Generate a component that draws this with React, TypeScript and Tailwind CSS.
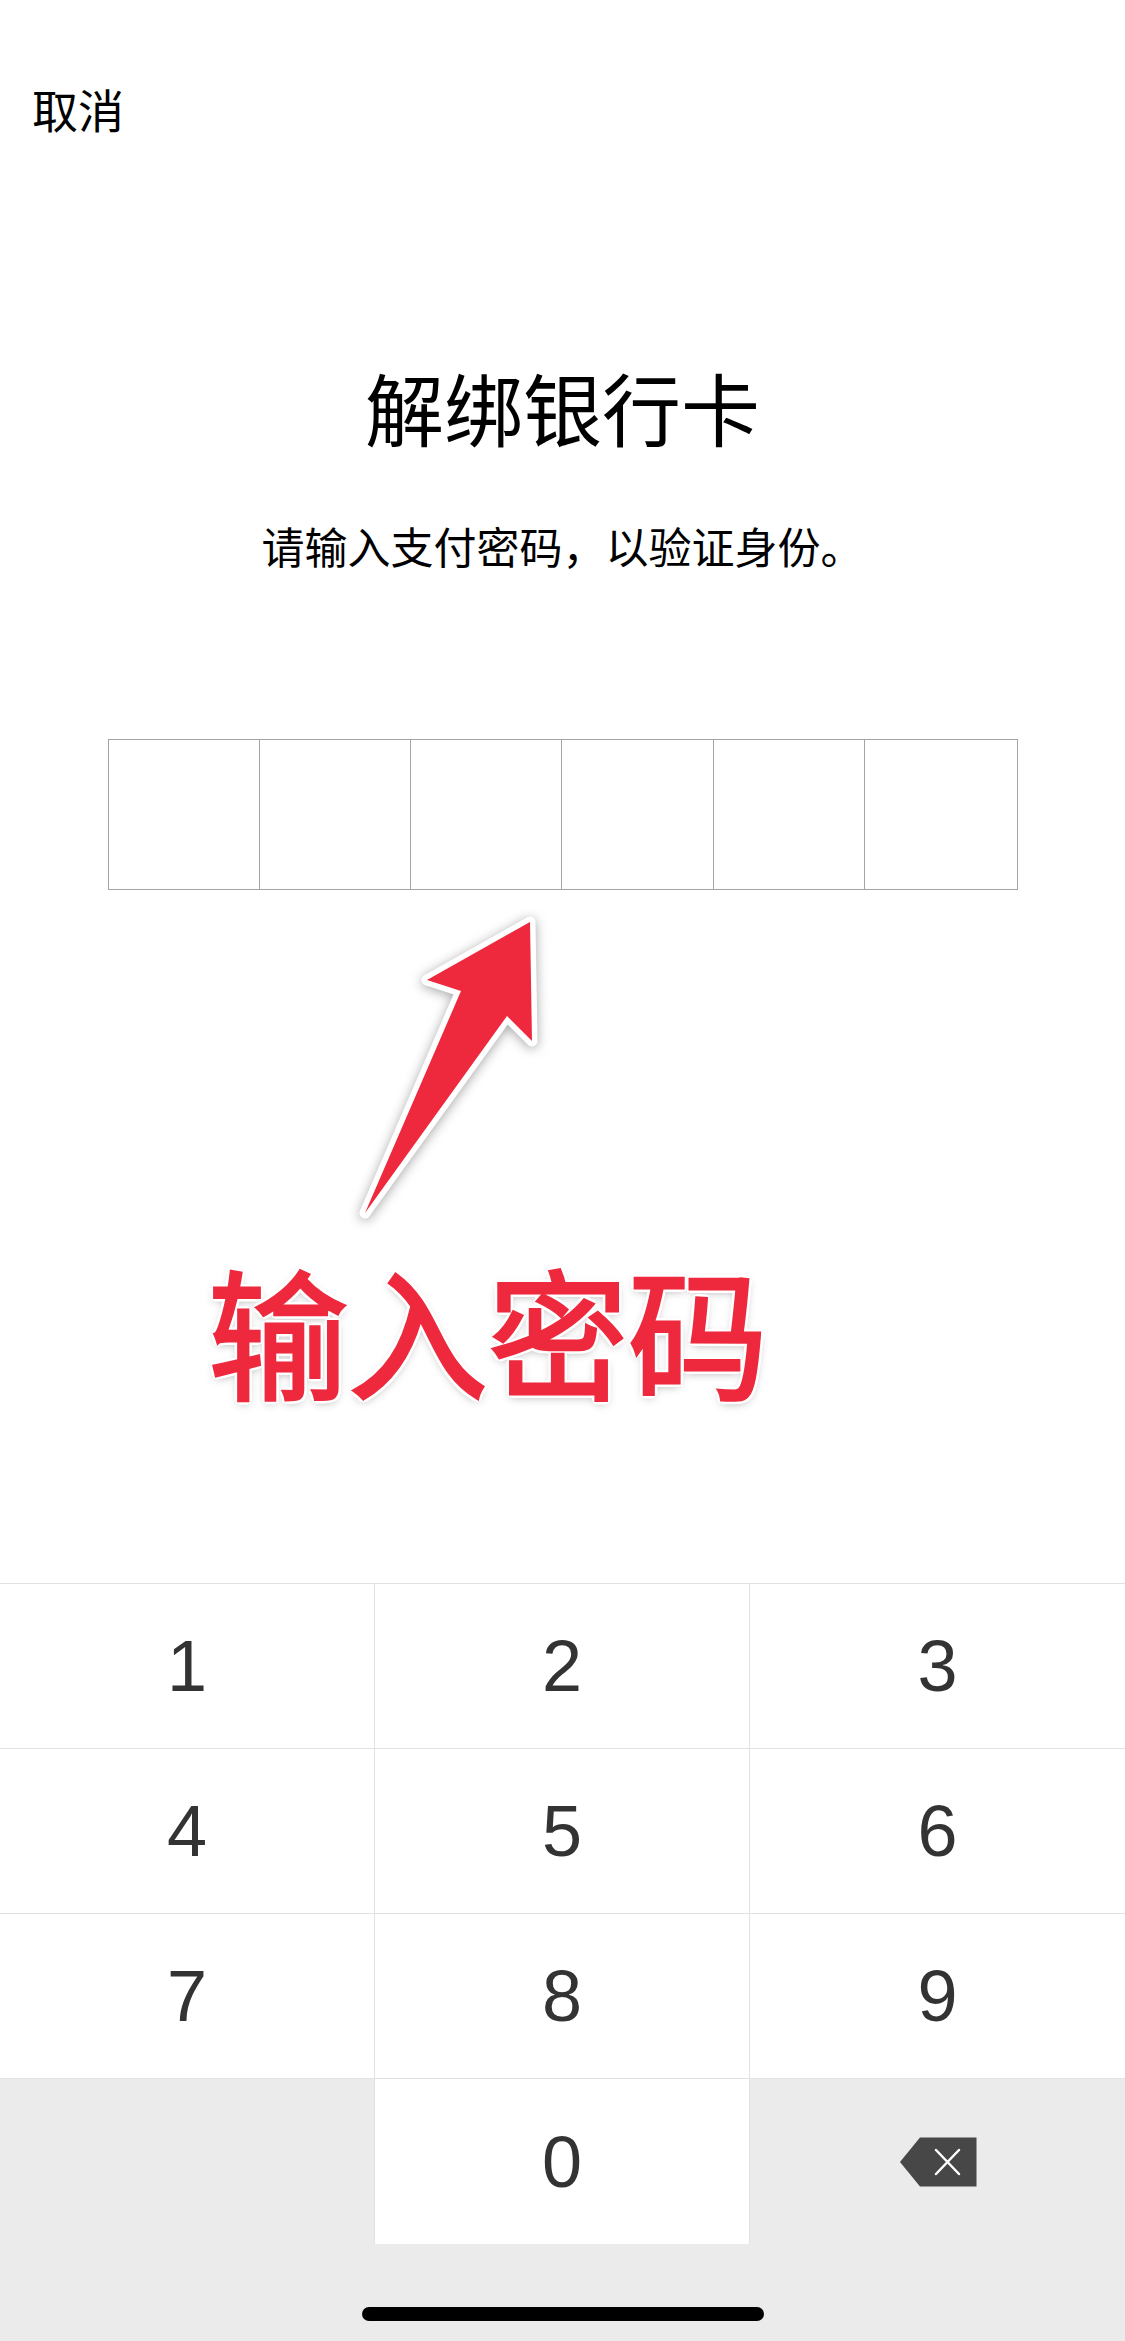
const keys = ["1", "2", "3", "4", "5", "6", "7", "8", "9"];

function Arrow() {
  const pts = "530,914 532,1033 507,1008 365,1205 461,983 427,972";
  return (
    <svg
      width="220"
      height="340"
      viewBox="340 890 220 340"
      className="block ml-[340px] drop-shadow-[0_2px_6px_rgba(0,0,0,0.35)]"
    >
      <polygon
        points={pts}
        fill="#ffffff"
        stroke="#ffffff"
        strokeWidth="11"
        strokeLinejoin="round"
      />
      <polygon points={pts} fill="#ee293d" />
    </svg>
  );
}

function BackspaceIcon() {
  return (
    <svg width="78" height="50" viewBox="0 0 78 50">
      <path d="M1 25 L21 0.5 H77.5 V49.5 H21 Z" fill="#474747" strokeLinejoin="round" />
      <path
        d="M37 13 L60 37 M60 13 L37 37"
        stroke="#ffffff"
        strokeWidth="2.5"
        strokeLinecap="round"
      />
    </svg>
  );
}

export default function App() {
  return (
    <div className="h-[2341px] w-[1125px] flex flex-col bg-white font-['Noto_Sans_CJK_SC','Noto_Sans',sans-serif] text-black overflow-hidden">
      <div className="pt-[85px] pl-[32px] text-[46px] leading-none">取消</div>

      <h1 className="mt-[236px] text-center text-[79px] leading-none font-normal">
        解绑银行卡
      </h1>
      <p className="mt-[78px] text-center text-[43px] leading-none">
        请输入支付密码，以验证身份。
      </p>

      <div className="mt-[172px] mx-auto w-[910px] h-[151px] grid grid-cols-6 border border-[#a4a4a4]">
        {[0, 1, 2, 3, 4, 5].map((i) => (
          <div
            key={i}
            className={i < 5 ? "border-r border-[#a4a4a4]" : ""}
          />
        ))}
      </div>

      <div className="mt-[8px]">
        <Arrow />
      </div>

      <div className="mt-[20px] ml-[208px] text-[140px] leading-none font-normal text-[#ee293d] [-webkit-text-stroke:3px_#ee293d] [text-shadow:0_0_3px_#fff,4px_0_0_#fff,-4px_0_0_#fff,0_4px_0_#fff,0_-4px_0_#fff,3px_3px_0_#fff,-3px_-3px_0_#fff,3px_-3px_0_#fff,-3px_3px_0_#fff,0_3px_10px_rgba(0,0,0,0.35)]">
        输入密码
      </div>

      <div className="mt-auto bg-[#ebebeb] border-t border-[#e2e2e2]">
        <div className="grid grid-cols-3 font-['Liberation_Sans','Arial',sans-serif] text-[72px] text-[#333333]">
          {keys.map((k, i) => (
            <div
              key={k}
              className={`h-[165px] flex items-center justify-center bg-white border-b border-[#e2e2e2] ${
                i % 3 < 2 ? "border-r" : ""
              }`}
            >
              {k}
            </div>
          ))}
          <div className="h-[165px] border-r border-[#e2e2e2]" />
          <div className="h-[165px] flex items-center justify-center bg-white border-r border-[#e2e2e2]">
            0
          </div>
          <div className="h-[165px] flex items-center justify-center">
            <BackspaceIcon />
          </div>
        </div>
        <div className="flex justify-center pt-[63px] pb-[20px]">
          <div className="w-[402px] h-[14px] rounded-full bg-black" />
        </div>
      </div>
    </div>
  );
}
